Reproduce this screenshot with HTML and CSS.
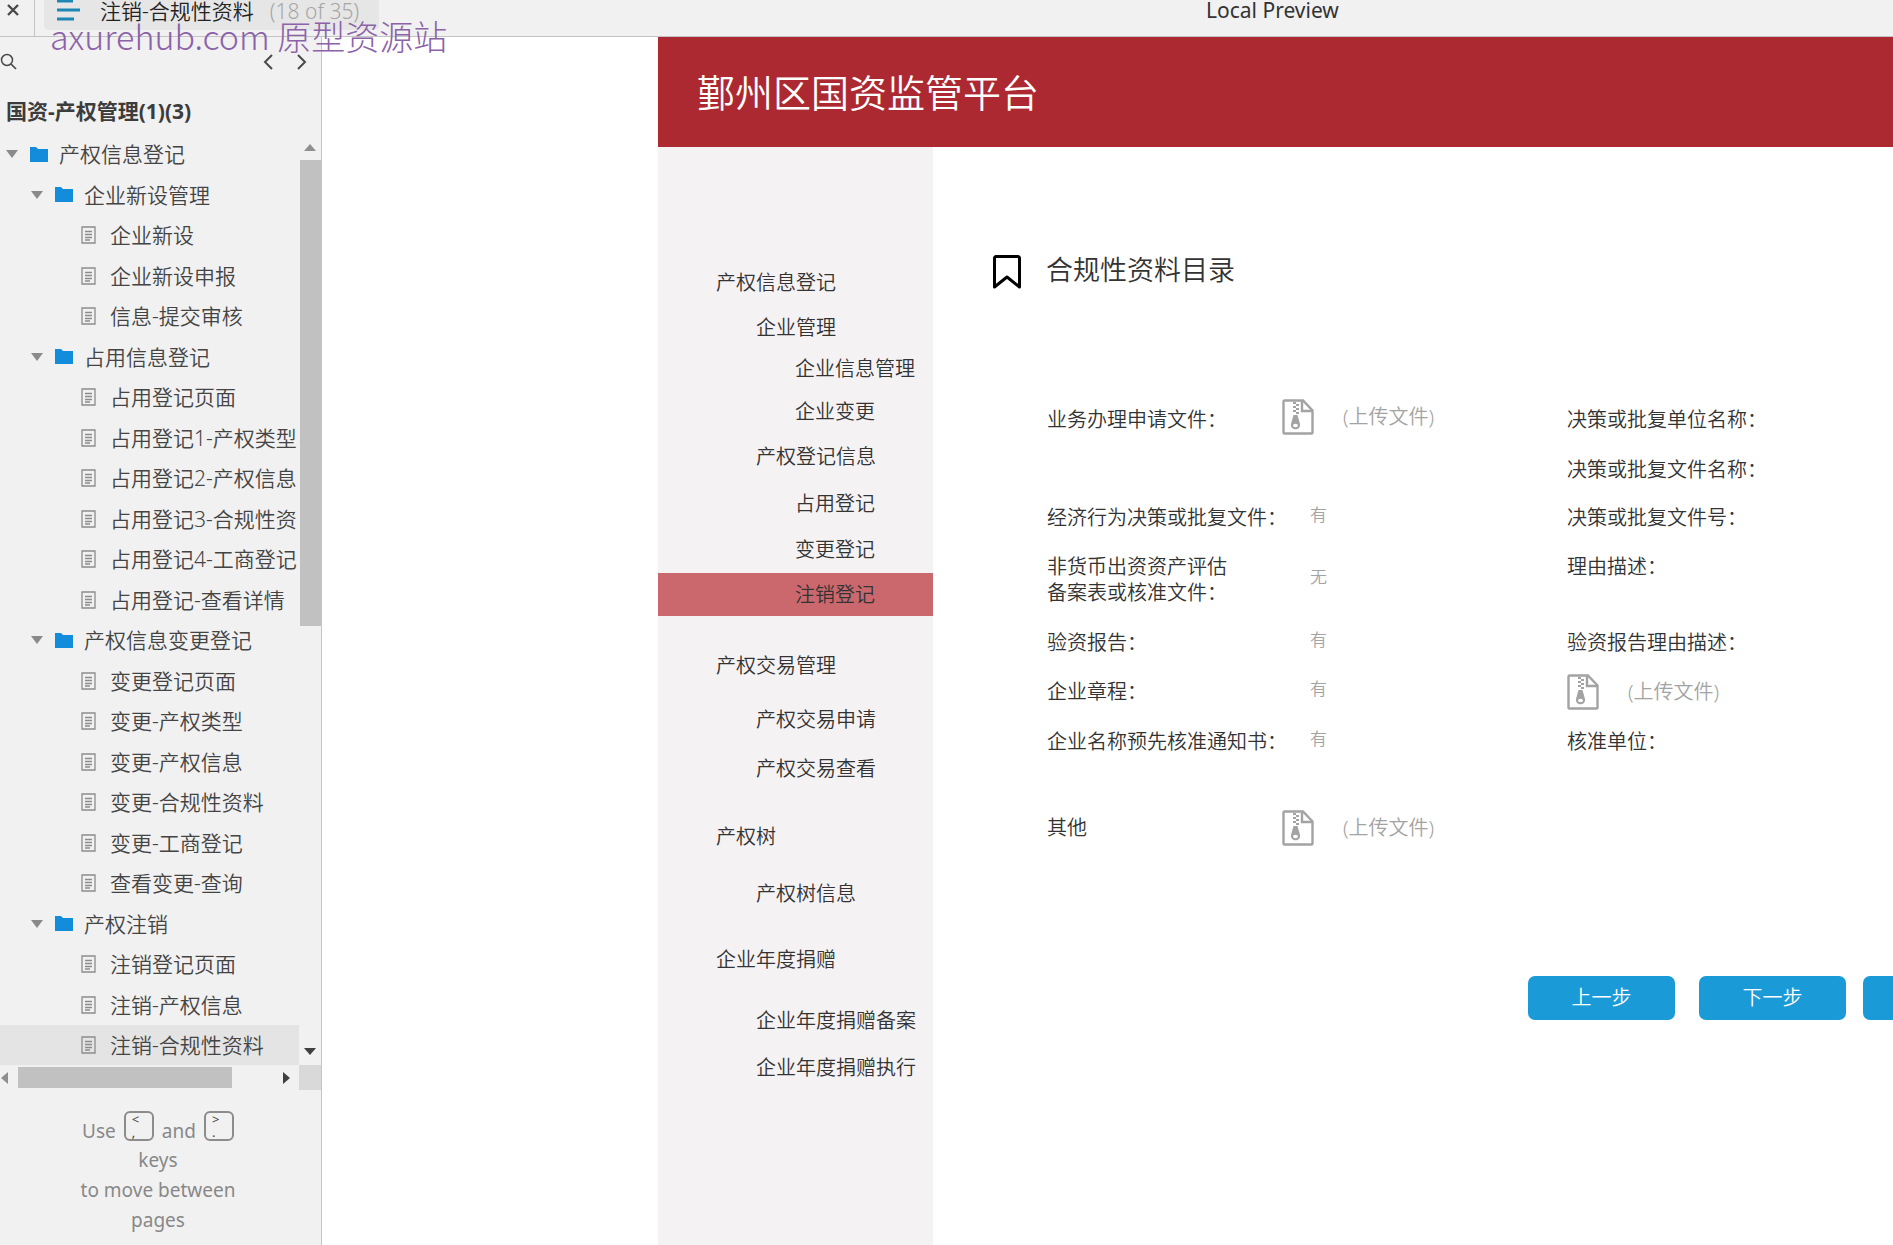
FILE: index.html
```html
<!DOCTYPE html>
<html lang="zh-CN">
<head>
<meta charset="utf-8">
<title>注销-合规性资料</title>
<link rel="stylesheet" href="styles.css">
</head>
<body>
<svg class="sprite" aria-hidden="true">
  <symbol id="folder" viewBox="0 0 18 15"><path d="M0 15V0h6l2 2h10v13z" fill="#148cdc"/></symbol>
  <symbol id="page" viewBox="0 0 15 18"><path d="M1 1h13v16H1zM4 5.500h7M4 8.500h7M4 11.500h7M4 14h5" fill="none" stroke="#8c8c8c" stroke-width="1.300"/></symbol>
  <symbol id="zip" viewBox="0 0 32 36">
    <path d="M2.500 1.500H21l9.500 10v22a1 1 0 0 1-1 1h-27a1 1 0 0 1-1-1v-31a1 1 0 0 1 1-1z" fill="none" stroke="#a3a3a3" stroke-width="2.400"/>
    <path d="M20 2v10h10" fill="none" stroke="#a3a3a3" stroke-width="2.400"/>
    <path d="M11 3h3v2h-3zM14 5h3v2h-3zM11 7h3v2h-3zM14 9h3v2h-3zM11 11h3v2h-3zM14 13h3v2h-3z" fill="#a3a3a3"/>
    <path d="M11.500 16h4l2.500 9c1 7-10 7-9 0z" fill="#a3a3a3"/>
    <ellipse cx="13.500" cy="26.500" rx="2.500" ry="1.800" fill="#fff"/>
  </symbol>
</svg>

<header class="topbar">
  <button class="close" type="button" aria-label="✕"><svg width="12" height="12" viewBox="0 0 12 12"><path d="M1 1l10 10M11 1L1 11" stroke="#4a4a4a" stroke-width="2.400"/></svg></button>
  <button class="tab" type="button">
    <svg width="24" height="24" viewBox="0 0 24 24"><path d="M1 4h16M1 13h23M1 22h17" stroke="#1c86b4" stroke-width="3"/></svg>
    <span class="tab-name">注销-合规性资料</span>
    <span class="tab-count">(18 of 35)</span>
  </button>
  <span class="preview">Local Preview</span>
  <div class="watermark">axurehub.com 原型资源站</div>
</header>

<div class="workspace">
  <aside class="sitemap">
    <div class="tools">
      <button type="button" aria-label="⌕"><svg width="17" height="17" viewBox="0 0 17 17"><circle cx="7" cy="7" r="5.500" fill="none" stroke="#4a4a4a" stroke-width="1.500"/><path d="M11 11l5 5" stroke="#4a4a4a" stroke-width="1.700"/></svg></button>
      <button class="prev" type="button" aria-label="‹"><svg width="10" height="16" viewBox="0 0 10 16"><path d="M9 1L2 8l7 7" fill="none" stroke="#4a4a4a" stroke-width="2"/></svg></button>
      <button type="button" aria-label="›"><svg width="10" height="16" viewBox="0 0 10 16"><path d="M1 1l7 7-7 7" fill="none" stroke="#4a4a4a" stroke-width="2"/></svg></button>
    </div>
    <h2 class="project">国资-产权管理(1)(3)</h2>
    <div class="tree-box">
      <ul class="tree">
        <li class="root"><i class="caret"></i><svg class="folder"><use href="#folder"/></svg><a href="#">产权信息登记</a></li>
        <li class="group"><i class="caret"></i><svg class="folder"><use href="#folder"/></svg><a href="#">企业新设管理</a></li>
        <li class="leaf"><svg class="page"><use href="#page"/></svg><a href="#">企业新设</a></li>
        <li class="leaf"><svg class="page"><use href="#page"/></svg><a href="#">企业新设申报</a></li>
        <li class="leaf"><svg class="page"><use href="#page"/></svg><a href="#">信息-提交审核</a></li>
        <li class="group"><i class="caret"></i><svg class="folder"><use href="#folder"/></svg><a href="#">占用信息登记</a></li>
        <li class="leaf"><svg class="page"><use href="#page"/></svg><a href="#">占用登记页面</a></li>
        <li class="leaf"><svg class="page"><use href="#page"/></svg><a href="#">占用登记1-产权类型</a></li>
        <li class="leaf"><svg class="page"><use href="#page"/></svg><a href="#">占用登记2-产权信息</a></li>
        <li class="leaf"><svg class="page"><use href="#page"/></svg><a href="#">占用登记3-合规性资</a></li>
        <li class="leaf"><svg class="page"><use href="#page"/></svg><a href="#">占用登记4-工商登记</a></li>
        <li class="leaf"><svg class="page"><use href="#page"/></svg><a href="#">占用登记-查看详情</a></li>
        <li class="group"><i class="caret"></i><svg class="folder"><use href="#folder"/></svg><a href="#">产权信息变更登记</a></li>
        <li class="leaf"><svg class="page"><use href="#page"/></svg><a href="#">变更登记页面</a></li>
        <li class="leaf"><svg class="page"><use href="#page"/></svg><a href="#">变更-产权类型</a></li>
        <li class="leaf"><svg class="page"><use href="#page"/></svg><a href="#">变更-产权信息</a></li>
        <li class="leaf"><svg class="page"><use href="#page"/></svg><a href="#">变更-合规性资料</a></li>
        <li class="leaf"><svg class="page"><use href="#page"/></svg><a href="#">变更-工商登记</a></li>
        <li class="leaf"><svg class="page"><use href="#page"/></svg><a href="#">查看变更-查询</a></li>
        <li class="group"><i class="caret"></i><svg class="folder"><use href="#folder"/></svg><a href="#">产权注销</a></li>
        <li class="leaf"><svg class="page"><use href="#page"/></svg><a href="#">注销登记页面</a></li>
        <li class="leaf"><svg class="page"><use href="#page"/></svg><a href="#">注销-产权信息</a></li>
        <li class="leaf current"><svg class="page"><use href="#page"/></svg><a href="#">注销-合规性资料</a></li>
      </ul>
      <div class="vbar">
        <svg width="12" height="7" viewBox="0 0 12 7"><path d="M0 7l6-7 6 7z" fill="#8f8f8f"/></svg>
        <div class="vthumb"></div>
        <svg width="12" height="7" viewBox="0 0 12 7"><path d="M0 0l6 7 6-7z" fill="#404040"/></svg>
      </div>
      <div class="hbar">
        <svg width="7" height="12" viewBox="0 0 7 12"><path d="M7 0L0 6l7 6z" fill="#8f8f8f"/></svg>
        <div class="hthumb"></div>
        <svg width="7" height="12" viewBox="0 0 7 12"><path d="M0 0l7 6-7 6z" fill="#404040"/></svg>
      </div>
      <div class="corner"></div>
    </div>
    <div class="hint">
      <div class="hint-keys">Use <kbd><span>&lt;</span><span>,</span></kbd> and <kbd><span>&gt;</span><span>.</span></kbd></div>
      <div>keys</div>
      <div>to move between</div>
      <div>pages</div>
    </div>
  </aside>

  <div class="canvas">
    <div class="banner"><h1>鄞州区国资监管平台</h1></div>
    <div class="body">
      <nav class="menu">
        <a class="l1" href="#">产权信息登记</a>
        <a class="l2" href="#">企业管理</a>
        <a class="l3" href="#">企业信息管理</a>
        <a class="l3" href="#">企业变更</a>
        <a class="l2" href="#">产权登记信息</a>
        <a class="l3" href="#">占用登记</a>
        <a class="l3" href="#">变更登记</a>
        <a class="l3 active" href="#">注销登记</a>
        <a class="l1" href="#">产权交易管理</a>
        <a class="l2" href="#">产权交易申请</a>
        <a class="l2" href="#">产权交易查看</a>
        <a class="l1" href="#">产权树</a>
        <a class="l2" href="#">产权树信息</a>
        <a class="l1" href="#">企业年度捐赠</a>
        <a class="l2" href="#">企业年度捐赠备案</a>
        <a class="l2" href="#">企业年度捐赠执行</a>
      </nav>
      <main class="content">
        <div class="heading">
          <svg width="28" height="34" viewBox="0 0 28 34"><path d="M3 1.500h22a1.500 1.500 0 0 1 1.500 1.500v29L14 22 1.500 32V3A1.500 1.500 0 0 1 3 1.500z" fill="none" stroke="#000" stroke-width="3" stroke-linejoin="round"/></svg>
          <h2>合规性资料目录</h2>
        </div>
        <div class="form">
          <span>业务办理申请文件：</span>
          <span class="value"><a class="upload" href="#"><svg class="zip"><use href="#zip"/></svg>(上传文件)</a></span>
          <span>决策或批复单位名称：</span>
          <span></span><span></span>
          <span>决策或批复文件名称：</span>
          <span>经济行为决策或批复文件：</span>
          <span class="value mark">有</span>
          <span>决策或批复文件号：</span>
          <span>非货币出资资产评估<br>备案表或核准文件：</span>
          <span class="value mark">无</span>
          <span class="first-line">理由描述：</span>
          <span>验资报告：</span>
          <span class="value mark">有</span>
          <span>验资报告理由描述：</span>
          <span>企业章程：</span>
          <span class="value mark">有</span>
          <a class="upload" href="#"><svg class="zip"><use href="#zip"/></svg>(上传文件)</a>
          <span>企业名称预先核准通知书：</span>
          <span class="value mark">有</span>
          <span>核准单位：</span>
          <span>其他</span>
          <a class="upload" href="#"><svg class="zip"><use href="#zip"/></svg>(上传文件)</a>
        </div>
        <div class="actions">
          <button type="button">上一步</button>
          <button type="button">下一步</button>
          <button type="button"></button>
        </div>
      </main>
    </div>
  </div>
</div>
</body>
</html>
```
FILE: styles.css
```css
* { box-sizing: border-box; }
body {
  margin: 0;
  min-height: 100vh;
  display: flex;
  flex-direction: column;
  overflow: hidden;
  background: #fff;
  color: #333;
  font: 350 20px/26px "Noto Sans", "Noto Sans CJK SC", sans-serif;
}
h1, h2, ul { margin: 0; padding: 0; font-weight: inherit; }
a { color: inherit; text-decoration: none; }
button { font: inherit; color: inherit; border: 0; padding: 0; background: none; }
svg { display: block; flex: none; }
.sprite { position: absolute; width: 0; height: 0; }

/* Player toolbar */
.topbar {
  position: relative;
  display: flex;
  height: 37px;
  background: #f1f1f1;
  border-bottom: 1px solid #c4c4c4;
}
.close {
  width: 35px;
  padding: 0 0 16px 7px;
  border-right: 1px solid #c4c4c4;
}
.tab {
  display: flex;
  align-items: flex-start;
  height: 30px;
  width: 335px;
  margin-left: 9px;
  padding-left: 12px;
  background: #e6e6e6;
  border-radius: 0 0 5px 5px;
  font-size: 21px;
  line-height: 22px;
}
.tab svg { margin-top: -3px; }
.tab-name { margin-left: 20px; color: #222; }
.tab-count { margin-left: 16px; color: #a6a6a6; }
.preview {
  margin-left: 827px;
  font-size: 21px;
  line-height: 20px;
  font-weight: 400;
}
.watermark {
  position: absolute;
  left: 50px;
  top: 13px;
  z-index: 1;
  color: #8c62a8;
  font: 300 34px/46px "Noto Sans CJK SC", sans-serif;
  white-space: nowrap;
}

.workspace { flex: 1; display: flex; }

/* Page tree */
.sitemap {
  flex: none;
  width: 322px;
  background: #f1f1f1;
  border-right: 1px solid #c4c4c4;
}
.tools {
  display: flex;
  align-items: center;
  gap: 24px;
  height: 49px;
  padding-right: 14px;
}
.tools .prev { margin-left: auto; }
.project {
  height: 48px;
  padding-left: 6px;
  font-size: 21px;
  font-weight: 700;
  line-height: 50px;
  color: #3c3c3c;
}
.tree-box {
  display: grid;
  grid-template-columns: 299px 22px;
  grid-template-rows: auto 25px;
}
.tree {
  overflow: hidden;
  list-style: none;
  font-size: 21px;
  white-space: nowrap;
  color: #444;
}
.tree li {
  display: flex;
  align-items: center;
  height: 40px;
}
.tree li:nth-child(even) { height: 41px; }
.root { padding-left: 6px; }
.group { padding-left: 31px; }
.leaf { padding-left: 81px; }
.current { background: #e4e4e4; }
.caret {
  border: 6px solid transparent;
  border-top: 8px solid #8a8a8a;
  border-bottom: 0;
}
.folder { width: 18px; height: 15px; margin: 0 11px 0 12px; }
.page { width: 15px; height: 18px; margin-right: 14px; }
.vbar {
  display: flex;
  flex-direction: column;
  align-items: center;
  padding: 10px 0;
}
.vthumb { width: 21px; height: 466px; margin: 9px 0 auto; background: #c1c1c1; }
.hbar {
  display: flex;
  align-items: center;
  padding: 0 9px 0 1px;
}
.hthumb { width: 214px; height: 21px; margin: 0 auto 0 10px; background: #c1c1c1; }
.corner { background: #d9d9d9; }
.hint {
  padding: 14px 5px 0 0;
  text-align: center;
  font-size: 19px;
  font-weight: 400;
  line-height: 30px;
  color: #888;
}
.hint-keys { display: flex; justify-content: center; gap: 8px; height: 41px; line-height: 54px; }
kbd {
  display: flex;
  flex-direction: column;
  width: 30px;
  height: 30px;
  margin-top: 7px;
  padding: 0 0 0 6px;
  border: 2px solid #8c8c8c;
  border-radius: 6px;
  text-align: left;
  font: 400 13px/13px "Noto Sans", sans-serif;
  color: #444;
}

/* Prototype page */
.canvas {
  flex: 1;
  min-width: 0;
  display: flex;
  flex-direction: column;
  padding-left: 336px;
  overflow: hidden;
}
.banner {
  display: flex;
  align-items: center;
  height: 110px;
  padding-left: 39px;
  background: #ad2932;
  color: #fff;
}
.banner h1 { font-size: 38px; line-height: 56px; }
.body { flex: 1; display: flex; }
.menu {
  flex: none;
  display: grid;
  grid-template-rows: 45px 41px 43px 45px 47px 46px 45px 71px 54px 49px 68px 57px 66px 61px 47px 44px;
  align-content: start;
  width: 275px;
  padding-top: 114px;
  background: #f5f2f3;
}
.menu a { height: 43px; line-height: 43px; }
.l1 { padding-left: 58px; }
.l2 { padding-left: 98px; }
.l3 { padding-left: 137px; }
.active { background: #cb686e; }
.content { flex: 1; min-width: 0; padding-top: 101px; }
.heading {
  display: flex;
  align-items: center;
  gap: 25px;
  height: 48px;
  padding-left: 60px;
}
.heading h2 { font-size: 27px; line-height: 36px; padding-bottom: 4px; }
.form {
  display: grid;
  grid-template-columns: 235px 285px 1fr;
  grid-template-rows: 50px 49px 47px 78px 47px 51px 49px 124px;
  align-items: center;
  padding: 99px 0 0 114px;
  white-space: nowrap;
}
.value { padding-bottom: 6px; color: #a3a3a3; }
.mark { padding-left: 28px; font-size: 17px; }
.first-line { align-self: start; padding-top: 13px; }
.upload { display: flex; align-items: center; gap: 29px; color: #a3a3a3; }
.zip { width: 32px; height: 36px; }
.actions {
  display: flex;
  gap: 24px;
  padding: 86px 0 0 595px;
}
.actions button {
  flex: none;
  width: 147px;
  height: 44px;
  border-radius: 7px;
  background: #1a9ad6;
  color: #fff;
}
.actions button:last-child { margin-left: -7px; }
```
